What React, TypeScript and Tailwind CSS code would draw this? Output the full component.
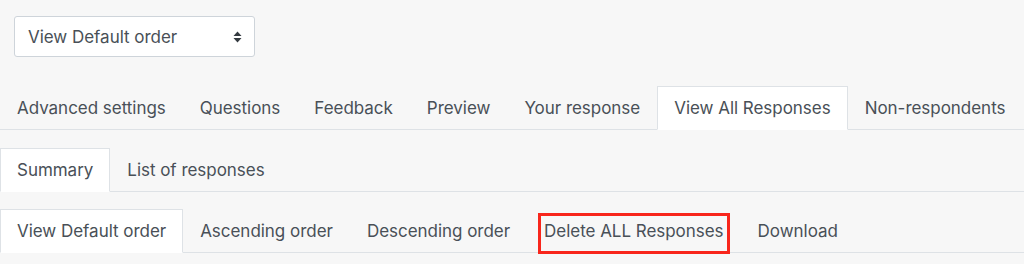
import React from 'react';

type Tab = { label: string; active?: boolean; marked?: boolean };

const TabRow: React.FC<{ tabs: Tab[] }> = ({ tabs }) => (
  <ul className="flex border-b border-[#dee2e6]">
    {tabs.map((t) => (
      <li key={t.label} className="-mb-px">
        <span
          className={`relative block whitespace-nowrap border px-4 py-2 text-[17px] leading-[26px] tracking-[-0.03px] ${
            t.active ? 'border-[#dee2e6] border-b-white bg-white' : 'border-transparent'
          }`}
        >
          {t.label}
          {t.marked && (
            <span className="pointer-events-none absolute bottom-[-2px] left-[10px] right-[10px] top-[3px] border-[3px] border-[#f8261c]" />
          )}
        </span>
      </li>
    ))}
  </ul>
);

const App: React.FC = () => {
  return (
    <div
      className="h-[264px] w-[1024px] overflow-hidden bg-[#f7f7f7] text-[#495057]"
      style={{ fontFamily: 'Inter, "Liberation Sans", sans-serif' }}
    >
      <div className="pl-[14px] pt-[16px]">
        <div className="flex h-[41px] w-[241px] items-center justify-between rounded-[3px] border border-[#ced4da] bg-white pl-[13px] pr-[12px] text-[17px] tracking-[-0.03px]">
          <span className="pt-[3px]">View Default order</span>
          <svg width="9" height="12" viewBox="0 0 9 12" className="text-[#343a40]">
            <path d="M4.5 0.5 L8.5 5 H0.5 Z" fill="currentColor" />
            <path d="M4.5 11.5 L8.5 7 H0.5 Z" fill="currentColor" />
          </svg>
        </div>
      </div>

      <div className="mt-[29px]">
        <TabRow
          tabs={[
            { label: 'Advanced settings' },
            { label: 'Questions' },
            { label: 'Feedback' },
            { label: 'Preview' },
            { label: 'Your response' },
            { label: 'View All Responses', active: true },
            { label: 'Non-respondents' },
          ]}
        />
      </div>

      <div className="mt-[18px]">
        <TabRow tabs={[{ label: 'Summary', active: true }, { label: 'List of responses' }]} />
      </div>

      <div className="mt-[17px]">
        <TabRow
          tabs={[
            { label: 'View Default order', active: true },
            { label: 'Ascending order' },
            { label: 'Descending order' },
            { label: 'Delete ALL Responses', marked: true },
            { label: 'Download' },
          ]}
        />
      </div>
    </div>
  );
};

export default App;
